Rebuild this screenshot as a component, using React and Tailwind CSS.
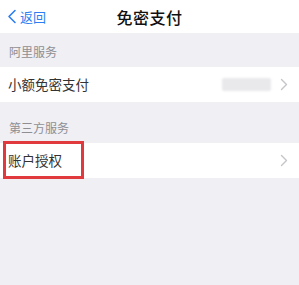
import React from "react";

const Chevron = () => (
  <svg width="8" height="13" viewBox="0 0 8 13" fill="none">
    <path d="M1.5 1.5L6.5 6.5L1.5 11.5" stroke="#c4c4c9" strokeWidth="1.4" strokeLinecap="round" strokeLinejoin="round" />
  </svg>
);

export default function App() {
  return (
    <div
      className="w-[299px] h-[285px] bg-[#efeff4] flex flex-col"
      style={{ fontFamily: '"Noto Sans CJK SC", "Noto Sans", sans-serif' }}
    >
      <div className="h-[33px] bg-white relative flex items-center justify-center shrink-0">
        <div className="absolute left-[7px] top-0 h-full flex items-center gap-[3px] text-[#2c7ef2]">
          <svg width="10" height="15" viewBox="0 0 10 15" fill="none">
            <path d="M8 1.5L2 7.5L8 13.5" stroke="#2c7ef2" strokeWidth="1.6" strokeLinecap="round" strokeLinejoin="round" />
          </svg>
          <span className="text-[13px] leading-none">返回</span>
        </div>
        <span className="text-[16px] leading-none font-medium text-[#111] tracking-[0.5px]">免密支付</span>
      </div>
      <div className="h-[34px] flex items-end pb-[9px] pl-[9px] text-[12px] leading-none text-[#8e8e93]">阿里服务</div>
      <div className="h-[35px] bg-white flex items-center pl-[8px] pr-[11px]">
        <span className="text-[13.5px] leading-none text-[#333]">小额免密支付</span>
        <div className="flex-1" />
        <div className="w-[49px] h-[13px] bg-[#e9e9ec] rounded-[2px] blur-[1px] mr-[9px]" />
        <Chevron />
      </div>
      <div className="h-[41px] flex items-end pb-[9px] pl-[9px] text-[12px] leading-none text-[#8e8e93]">第三方服务</div>
      <div className="h-[35px] bg-white flex items-center pr-[11px] relative">
        <div className="absolute left-[3px] top-[-2px] w-[81px] h-[38px] border-[3px] border-[#e0393e]" />
        <span className="pl-[8px] text-[13.5px] leading-none text-[#333]">账户授权</span>
        <div className="flex-1" />
        <Chevron />
      </div>
    </div>
  );
}
